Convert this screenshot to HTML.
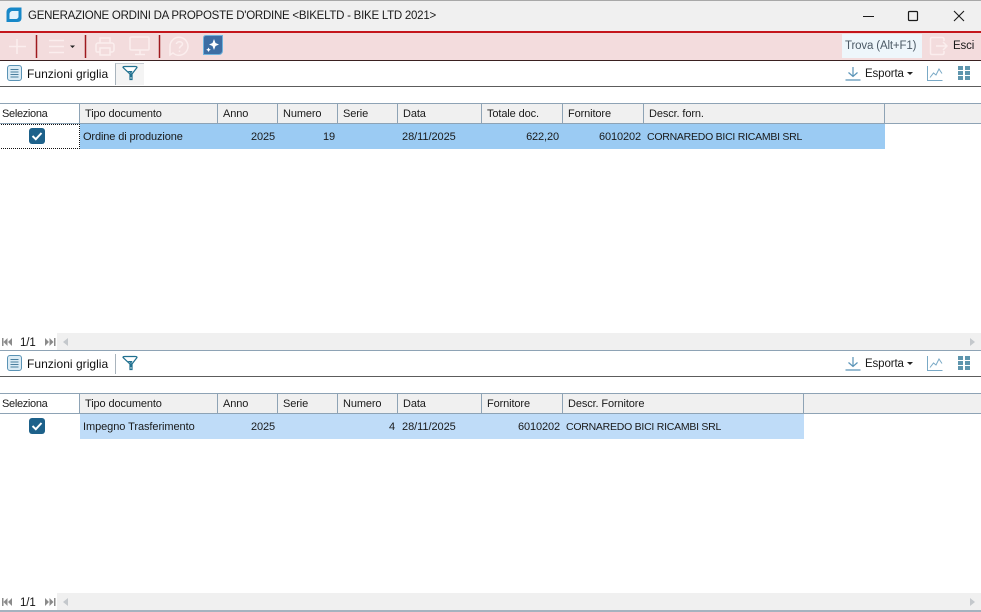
<!DOCTYPE html>
<html><head><meta charset="utf-8"><style>
html,body{margin:0;padding:0;background:#fff}
#p{position:relative;width:981px;height:612px;overflow:hidden;background:#fff;font-family:"Liberation Sans",sans-serif;font-size:11px;letter-spacing:-.12px;color:#1a1a1a}
.a{position:absolute}
.t{position:absolute;white-space:nowrap;line-height:14px}
.r{text-align:right}
svg{position:absolute;overflow:visible}
</style></head><body><div id="p">
<div class="a" style="left:0;top:0;width:981px;height:31px;background:#f0f0f0;border-top:1px solid #a8a8a8;box-sizing:border-box"></div>
<div class="a" style="left:0;top:31px;width:981px;height:2px;background:#c4161c"></div>
<div class="a" style="left:0;top:33px;width:981px;height:27px;background:#f3dcdd"></div>
<div class="a" style="left:0;top:60px;width:981px;height:1px;background:#3a2020"></div>

<svg style="left:6px;top:7px" width="17" height="17"><path d="M5 0.500H15.500V11C15.500 13.500 14 15 11.500 15H0.500V5C0.500 2.500 2.500 0.500 5 0.500Z" fill="#1788c8"/><path d="M6.500 4H12.500V9.500C12.500 10.800 11.500 12 10 12H3.500V7C3.500 5.300 5 4 6.500 4Z" fill="#e4f3fb"/></svg>
<div class="t" style="left:28px;top:9px;font-size:11.500px;letter-spacing:-.25px">GENERAZIONE ORDINI DA PROPOSTE D'ORDINE &lt;BIKELTD - BIKE LTD 2021&gt;</div>
<svg style="left:860px;top:8px" width="110" height="16" fill="none" stroke="#1a1a1a" stroke-width="1"><path d="M3 8.500H14"/><rect x="48.500" y="3.500" width="9" height="9" rx="1" stroke-width="1.200"/><path d="M94 3L104 13M104 3L94 13" stroke-width="1.100"/></svg>

<!-- main toolbar -->
<svg style="left:0;top:33px" width="230" height="27" fill="none" stroke="#fbeeee" stroke-width="1.500">
<path d="M17 6V21M9 13.500H26"/>
<path d="M36.500 2V25M85.500 2V25M159.500 2V25" stroke="#9e1a1f" stroke-width="1.500"/>
<path d="M49 7.500H64M49 13.500H64M49 19.500H64"/>
<path d="M70 12.500H75L72.500 15Z" fill="#222" stroke="none"/>
<path d="M100 10V5H110V10M100 19H97C96 19 96 18 96 17V12C96 11 97 10 98 10H112C113 10 114 11 114 12V17C114 18 113 19 112 19H110M100 15H110V22H100Z"/>
<path d="M132 4H148C149 4 149 5 149 5V16C149 17 148 17 148 17H132C131 17 130 17 130 16V5C130 4 131 4 132 4ZM140 17V21M135 21.500H145"/>
<path d="M170 13.500A9 9 0 1 1 173 20L170 22Z"/>
<path d="M176.500 11C176.500 8 182.500 8 182.500 11C182.500 13 179.500 13 179.500 15.500M179.500 17.500V19"/>
</svg>
<svg style="left:203px;top:35px" width="20" height="20"><path d="M3 0.500H19.500V16C19.500 18 18 19.500 16 19.500H0.500V3C0.500 1.500 1.500 0.500 3 0.500Z" fill="#3d6da3" stroke="#6fb2dc"/><path d="M11 4L12.500 8L16 9.500L12.500 11L11 15L9.500 11L6 9.500L9.500 8Z" fill="#fff"/><path d="M5.500 12.500L6.300 14L7.800 14.800L6.300 15.500L5.500 17L4.700 15.500L3.200 14.800L4.700 14Z" fill="#fff"/></svg>
<div class="a" style="left:842px;top:34px;width:80px;height:24px;background:#eef6fb"></div>
<div class="t" style="left:845px;top:39px;color:#4c5a66;font-size:11.500px;letter-spacing:-.15px">Trova (Alt+F1)</div>
<svg style="left:929px;top:36px" width="20" height="20" fill="none" stroke="#fbeeee" stroke-width="1.500"><path d="M15 5V3C15 2 14 1.500 13 1.500H3C2 1.500 1.500 2 1.500 3V17C1.500 18 2 18.500 3 18.500H13C14 18.500 15 18 15 17V15M7 10H18M14 6L18 10L14 14"/></svg>
<div class="t" style="left:953px;top:39px;font-size:11.500px">Esci</div>

<!-- toolbar 1 -->
<svg style="left:7px;top:65px" width="16" height="16" fill="#dcecf5" stroke="#5a93b5"><rect x=".5" y=".5" width="14" height="15" rx="2.500"/><path d="M3.500 4.500H11.500M3.500 7H11.500M3.500 9.500H11.500M3.500 12H11.500" stroke="#4a7f9f" stroke-width="1"/></svg>
<div class="t" style="left:27px;top:67px;font-size:12px;letter-spacing:.03px;color:#111">Funzioni griglia</div>
<div class="a" style="left:115px;top:63px;width:29px;height:22px;background:#f4f4f4;border-left:1px solid #a9b4bd;border-top:1px solid #c5ccd2;box-sizing:border-box"></div>
<svg style="left:122px;top:65px" width="16" height="17" fill="none" stroke="#20708f" stroke-width="1.200"><path d="M1 2.500C1 1.500 2 1.500 3 1.500H13C14 1.500 15 1.500 15 2.500L10 9V14.500H8V9Z" fill="#fff"/><path d="M5.500 6H10.500L9.500 8V12H8.500V8Z" fill="#20708f" stroke="none"/></svg>
<svg style="left:845px;top:66px" width="16" height="16" fill="none" stroke="#5a94b8" stroke-width="1.200"><path d="M8 1V10.500M3.500 6.500L8 10.500L12.500 6.500M0.500 14H15.500"/></svg>
<div class="t" style="left:865px;top:67px;font-size:11.500px">Esporta</div>
<svg style="left:907px;top:72px" width="6" height="4"><path d="M0 0H6L3 3Z" fill="#222"/></svg>
<svg style="left:927px;top:66px" width="16" height="15" fill="none" stroke="#79a9c6" stroke-width="1"><path d="M.5 0V14.500H15.500"/><path d="M3 11.500L6.500 7L9 9L12 3L15 7.500"/></svg>
<svg style="left:958px;top:66px" width="12" height="14" fill="#5e95ad"><rect width="5" height="4"/><rect x="7" width="5" height="4"/><rect y="5" width="5" height="4"/><rect x="7" y="5" width="5" height="4"/><rect y="10" width="5" height="4"/><rect x="7" y="10" width="5" height="4"/></svg>
<div class="a" style="left:0;top:86px;width:981px;height:1px;background:#5c5c5c"></div>

<!-- header 1 -->
<div class="a" style="left:0;top:103px;width:981px;height:21px;background:#f0f0f0;border-top:1px solid #8ea3b5;border-bottom:1px solid #8ea3b5;box-sizing:border-box"></div>
<div class="a" style="left:0;top:104px;width:79px;height:19px;background:#fff"></div>
<div class="a" style="left:79px;top:104px;width:1px;height:19px;background:#8ea3b5"></div><div class="a" style="left:217px;top:104px;width:1px;height:19px;background:#8ea3b5"></div><div class="a" style="left:277px;top:104px;width:1px;height:19px;background:#8ea3b5"></div><div class="a" style="left:337px;top:104px;width:1px;height:19px;background:#8ea3b5"></div><div class="a" style="left:397px;top:104px;width:1px;height:19px;background:#8ea3b5"></div><div class="a" style="left:481px;top:104px;width:1px;height:19px;background:#8ea3b5"></div><div class="a" style="left:562px;top:104px;width:1px;height:19px;background:#8ea3b5"></div><div class="a" style="left:643px;top:104px;width:1px;height:19px;background:#8ea3b5"></div><div class="a" style="left:884px;top:104px;width:1px;height:19px;background:#8ea3b5"></div>
<div class="t" style="left:2px;top:107px;letter-spacing:-.32px">Seleziona</div><div class="t" style="left:85px;top:107px">Tipo documento</div><div class="t" style="left:223px;top:107px">Anno</div><div class="t" style="left:283px;top:107px">Numero</div><div class="t" style="left:343px;top:107px">Serie</div><div class="t" style="left:403px;top:107px">Data</div><div class="t" style="left:487px;top:107px">Totale doc.</div><div class="t" style="left:568px;top:107px">Fornitore</div><div class="t" style="left:649px;top:107px">Descr. forn.</div>
<!-- row 1 -->
<div class="a" style="left:80px;top:124px;width:805px;height:25px;background:#9bcbf3"></div>
<div class="a" style="left:-1px;top:124px;width:81px;height:25px;border:1px dotted #111;box-sizing:border-box"></div>
<svg style="left:29px;top:128px" width="16" height="16"><rect width="16" height="16" rx="3" fill="#1d618a"/><path d="M3.500 8L6.800 11.200L12.500 5" fill="none" stroke="#fff" stroke-width="2"/></svg>
<div class="t" style="left:83px;top:130px">Ordine di produzione</div>
<div class="t r" style="left:220px;top:130px;width:55px">2025</div><div class="t r" style="left:280px;top:130px;width:55px">19</div><div class="t" style="left:402px;top:130px;letter-spacing:-.05px">28/11/2025</div><div class="t r" style="left:485px;top:130px;width:74px">622,20</div><div class="t r" style="left:566px;top:130px;width:75px">6010202</div><div class="t" style="left:647px;top:130px;font-size:10.500px;letter-spacing:-.25px">CORNAREDO BICI RICAMBI SRL</div>

<!-- pager 1 -->
<svg style="left:2px;top:338px" width="54" height="9" fill="#8b8b8b"><path d="M0 0H1.500V8H0ZM5.500 0V8L1.500 4ZM10 0V8L6 4Z"/><path d="M43 0V8L47 4ZM47.500 0V8L51.500 4ZM52 0H53.500V8H52Z"/></svg>
<div class="t" style="left:20px;top:336px;font-size:11.500px;color:#111">1/1</div>
<div class="a" style="left:57px;top:333px;width:924px;height:17px;background:#f0f0f0"></div>
<svg style="left:63px;top:338px" width="912" height="9" fill="#c4c8cc"><path d="M5 0V8L0 4Z"/><path d="M907 0V8L912 4Z"/></svg>
<div class="a" style="left:0;top:350px;width:981px;height:1px;background:#8ea3b5"></div>

<!-- toolbar 2 -->
<svg style="left:7px;top:355px" width="16" height="16" fill="#dcecf5" stroke="#5a93b5"><rect x=".5" y=".5" width="14" height="15" rx="2.500"/><path d="M3.500 4.500H11.500M3.500 7H11.500M3.500 9.500H11.500M3.500 12H11.500" stroke="#4a7f9f" stroke-width="1"/></svg>
<div class="t" style="left:27px;top:357px;font-size:12px;letter-spacing:.03px;color:#111">Funzioni griglia</div>
<div class="a" style="left:115px;top:354px;width:1px;height:20px;background:#a9b4bd"></div>
<svg style="left:122px;top:355px" width="16" height="17" fill="none" stroke="#20708f" stroke-width="1.200"><path d="M1 2.500C1 1.500 2 1.500 3 1.500H13C14 1.500 15 1.500 15 2.500L10 9V14.500H8V9Z" fill="#fff"/><path d="M5.500 6H10.500L9.500 8V12H8.500V8Z" fill="#20708f" stroke="none"/></svg>
<svg style="left:845px;top:356px" width="16" height="16" fill="none" stroke="#5a94b8" stroke-width="1.200"><path d="M8 1V10.500M3.500 6.500L8 10.500L12.500 6.500M0.500 14H15.500"/></svg>
<div class="t" style="left:865px;top:357px;font-size:11.500px">Esporta</div>
<svg style="left:907px;top:362px" width="6" height="4"><path d="M0 0H6L3 3Z" fill="#222"/></svg>
<svg style="left:927px;top:356px" width="16" height="15" fill="none" stroke="#79a9c6" stroke-width="1"><path d="M.5 0V14.500H15.500"/><path d="M3 11.500L6.500 7L9 9L12 3L15 7.500"/></svg>
<svg style="left:958px;top:356px" width="12" height="14" fill="#5e95ad"><rect width="5" height="4"/><rect x="7" width="5" height="4"/><rect y="5" width="5" height="4"/><rect x="7" y="5" width="5" height="4"/><rect y="10" width="5" height="4"/><rect x="7" y="10" width="5" height="4"/></svg>
<div class="a" style="left:0;top:376px;width:981px;height:1px;background:#5c5c5c"></div>

<!-- header 2 -->
<div class="a" style="left:0;top:393px;width:981px;height:21px;background:#f0f0f0;border-top:1px solid #8ea3b5;border-bottom:1px solid #8ea3b5;box-sizing:border-box"></div>
<div class="a" style="left:0;top:394px;width:79px;height:19px;background:#fff"></div>
<div class="a" style="left:79px;top:394px;width:1px;height:19px;background:#8ea3b5"></div><div class="a" style="left:217px;top:394px;width:1px;height:19px;background:#8ea3b5"></div><div class="a" style="left:277px;top:394px;width:1px;height:19px;background:#8ea3b5"></div><div class="a" style="left:337px;top:394px;width:1px;height:19px;background:#8ea3b5"></div><div class="a" style="left:397px;top:394px;width:1px;height:19px;background:#8ea3b5"></div><div class="a" style="left:481px;top:394px;width:1px;height:19px;background:#8ea3b5"></div><div class="a" style="left:562px;top:394px;width:1px;height:19px;background:#8ea3b5"></div><div class="a" style="left:803px;top:394px;width:1px;height:19px;background:#8ea3b5"></div>
<div class="t" style="left:2px;top:397px;letter-spacing:-.32px">Seleziona</div><div class="t" style="left:85px;top:397px">Tipo documento</div><div class="t" style="left:223px;top:397px">Anno</div><div class="t" style="left:283px;top:397px">Serie</div><div class="t" style="left:343px;top:397px">Numero</div><div class="t" style="left:403px;top:397px">Data</div><div class="t" style="left:487px;top:397px">Fornitore</div><div class="t" style="left:568px;top:397px">Descr. Fornitore</div>
<!-- row 2 -->
<div class="a" style="left:80px;top:414px;width:724px;height:25px;background:#bfdcf8"></div>
<svg style="left:29px;top:418px" width="16" height="16"><rect width="16" height="16" rx="3" fill="#1d618a"/><path d="M3.500 8L6.800 11.200L12.500 5" fill="none" stroke="#fff" stroke-width="2"/></svg>
<div class="t" style="left:83px;top:420px;letter-spacing:-.07px">Impegno Trasferimento</div>
<div class="t r" style="left:220px;top:420px;width:55px">2025</div><div class="t r" style="left:340px;top:420px;width:55px">4</div><div class="t" style="left:402px;top:420px;letter-spacing:-.05px">28/11/2025</div><div class="t r" style="left:485px;top:420px;width:75px">6010202</div><div class="t" style="left:566px;top:420px;font-size:10.500px;letter-spacing:-.25px">CORNAREDO BICI RICAMBI SRL</div>

<!-- pager 2 -->
<svg style="left:2px;top:598px" width="54" height="9" fill="#8b8b8b"><path d="M0 0H1.500V8H0ZM5.500 0V8L1.500 4ZM10 0V8L6 4Z"/><path d="M43 0V8L47 4ZM47.500 0V8L51.500 4ZM52 0H53.500V8H52Z"/></svg>
<div class="t" style="left:20px;top:596px;font-size:11.500px;color:#111">1/1</div>
<div class="a" style="left:57px;top:593px;width:924px;height:17px;background:#f0f0f0"></div>
<svg style="left:63px;top:598px" width="912" height="9" fill="#c4c8cc"><path d="M5 0V8L0 4Z"/><path d="M907 0V8L912 4Z"/></svg>
<div class="a" style="left:0;top:610px;width:981px;height:2px;background:#a4b2bf"></div>
</div></body></html>
